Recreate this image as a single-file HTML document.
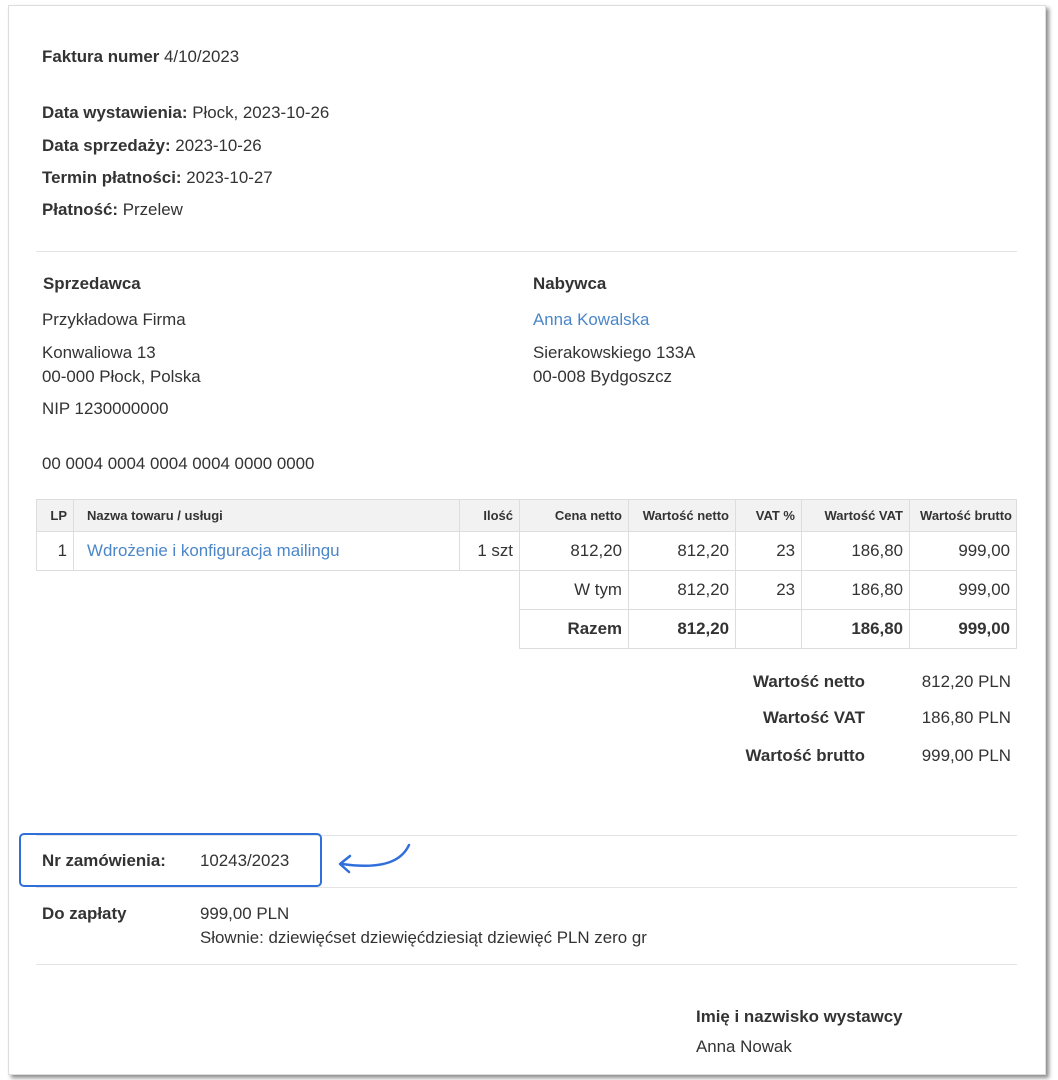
<!DOCTYPE html>
<html><head><meta charset="utf-8"><style>
body{margin:0;width:1058px;height:1080px;background:#fff;font-family:"Liberation Sans",Arial,sans-serif;color:#333;position:relative;overflow:hidden}
.card{position:absolute;left:8px;top:5px;width:1036px;height:1068px;border:1px solid #ddd;background:#fff;box-shadow:3px 3px 4px rgba(0,0,0,.45)}
.t{position:absolute;font-size:16.9px;white-space:nowrap;line-height:24px}
b{font-weight:bold}
.a{color:#4a86c8}
.hr{position:absolute;height:1px;background:#e4e4e4}
table{position:absolute;left:36px;top:499px;border-collapse:collapse;font-size:16.9px;table-layout:fixed;width:980px}
td,th{border:1px solid #ddd;padding:0 6px;text-align:right;height:38px;white-space:nowrap;overflow:hidden}
th{background:#f2f2f2;font-size:13px;height:31px}
</style></head><body>
<div class="card"></div>
<div class="t" style="left:42px;top:45px"><b>Faktura numer</b> 4/10/2023</div>
<div class="t" style="left:42px;top:101px"><b>Data wystawienia:</b> Płock, 2023-10-26</div>
<div class="t" style="left:42px;top:134px"><b>Data sprzedaży:</b> 2023-10-26</div>
<div class="t" style="left:42px;top:166px"><b>Termin płatności:</b> 2023-10-27</div>
<div class="t" style="left:42px;top:198px"><b>Płatność:</b> Przelew</div>
<div class="hr" style="left:36px;top:251px;width:981px"></div>
<div class="t" style="left:43px;top:272px"><b>Sprzedawca</b></div>
<div class="t" style="left:42px;top:308px">Przykładowa Firma</div>
<div class="t" style="left:42px;top:341px">Konwaliowa 13<br>00-000 Płock, Polska</div>
<div class="t" style="left:42px;top:397px">NIP 1230000000</div>
<div class="t" style="left:42px;top:452px">00 0004 0004 0004 0004 0000 0000</div>
<div class="t" style="left:533px;top:272px"><b>Nabywca</b></div>
<div class="t a" style="left:533px;top:308px">Anna Kowalska</div>
<div class="t" style="left:533px;top:341px">Sierakowskiego 133A<br>00-008 Bydgoszcz</div>
<table>
<colgroup><col style="width:37px"><col style="width:386px"><col style="width:60px"><col style="width:109px"><col style="width:107px"><col style="width:66px"><col style="width:108px"><col style="width:107px"></colgroup>
<tr><th>LP</th><th style="text-align:left;padding-left:13px">Nazwa towaru / usługi</th><th>Ilość</th><th>Cena netto</th><th>Wartość netto</th><th>VAT %</th><th>Wartość VAT</th><th style="padding:0 4px">Wartość brutto</th></tr>
<tr><td>1</td><td style="text-align:left;padding-left:13px" class="a">Wdrożenie i konfiguracja mailingu</td><td>1 szt</td><td>812,20</td><td>812,20</td><td>23</td><td>186,80</td><td>999,00</td></tr>
<tr><td colspan="3" style="border:none;border-top:1px solid #ddd"></td><td>W tym</td><td>812,20</td><td>23</td><td>186,80</td><td>999,00</td></tr>
<tr><td colspan="3" style="border:none"></td><td><b>Razem</b></td><td><b>812,20</b></td><td></td><td><b>186,80</b></td><td><b>999,00</b></td></tr>
</table>
<div class="t" style="right:193px;top:670px"><b>Wartość netto</b></div>
<div class="t" style="right:47px;top:670px">812,20 PLN</div>
<div class="t" style="right:193px;top:706px"><b>Wartość VAT</b></div>
<div class="t" style="right:47px;top:706px">186,80 PLN</div>
<div class="t" style="right:193px;top:744px"><b>Wartość brutto</b></div>
<div class="t" style="right:47px;top:744px">999,00 PLN</div>
<div class="hr" style="left:36px;top:835px;width:981px"></div>
<div class="hr" style="left:36px;top:887px;width:981px"></div>
<div style="position:absolute;left:19px;top:833px;width:299px;height:50px;border:2px solid #2f6fdc;border-radius:5px"></div>
<div class="t" style="left:42px;top:849px"><b>Nr zamówienia:</b></div>
<div class="t" style="left:200px;top:849px">10243/2023</div>
<svg style="position:absolute;left:330px;top:840px" width="90" height="40" viewBox="0 0 90 40"><path d="M79 5 C72 20 55 30 12 24" fill="none" stroke="#2f6fdc" stroke-width="2.5" stroke-linecap="round"/><path d="M20 16 L10 24 L19 32" fill="none" stroke="#2f6fdc" stroke-width="2.5" stroke-linecap="round" stroke-linejoin="round"/></svg>
<div class="t" style="left:42px;top:902px"><b>Do zapłaty</b></div>
<div class="t" style="left:200px;top:902px">999,00 PLN</div>
<div class="t" style="left:200px;top:926px">Słownie: dziewięćset dziewięćdziesiąt dziewięć PLN zero gr</div>
<div class="hr" style="left:36px;top:964px;width:981px"></div>
<div class="t" style="left:696px;top:1005px"><b>Imię i nazwisko wystawcy</b></div>
<div class="t" style="left:696px;top:1035px">Anna Nowak</div>
</body></html>
